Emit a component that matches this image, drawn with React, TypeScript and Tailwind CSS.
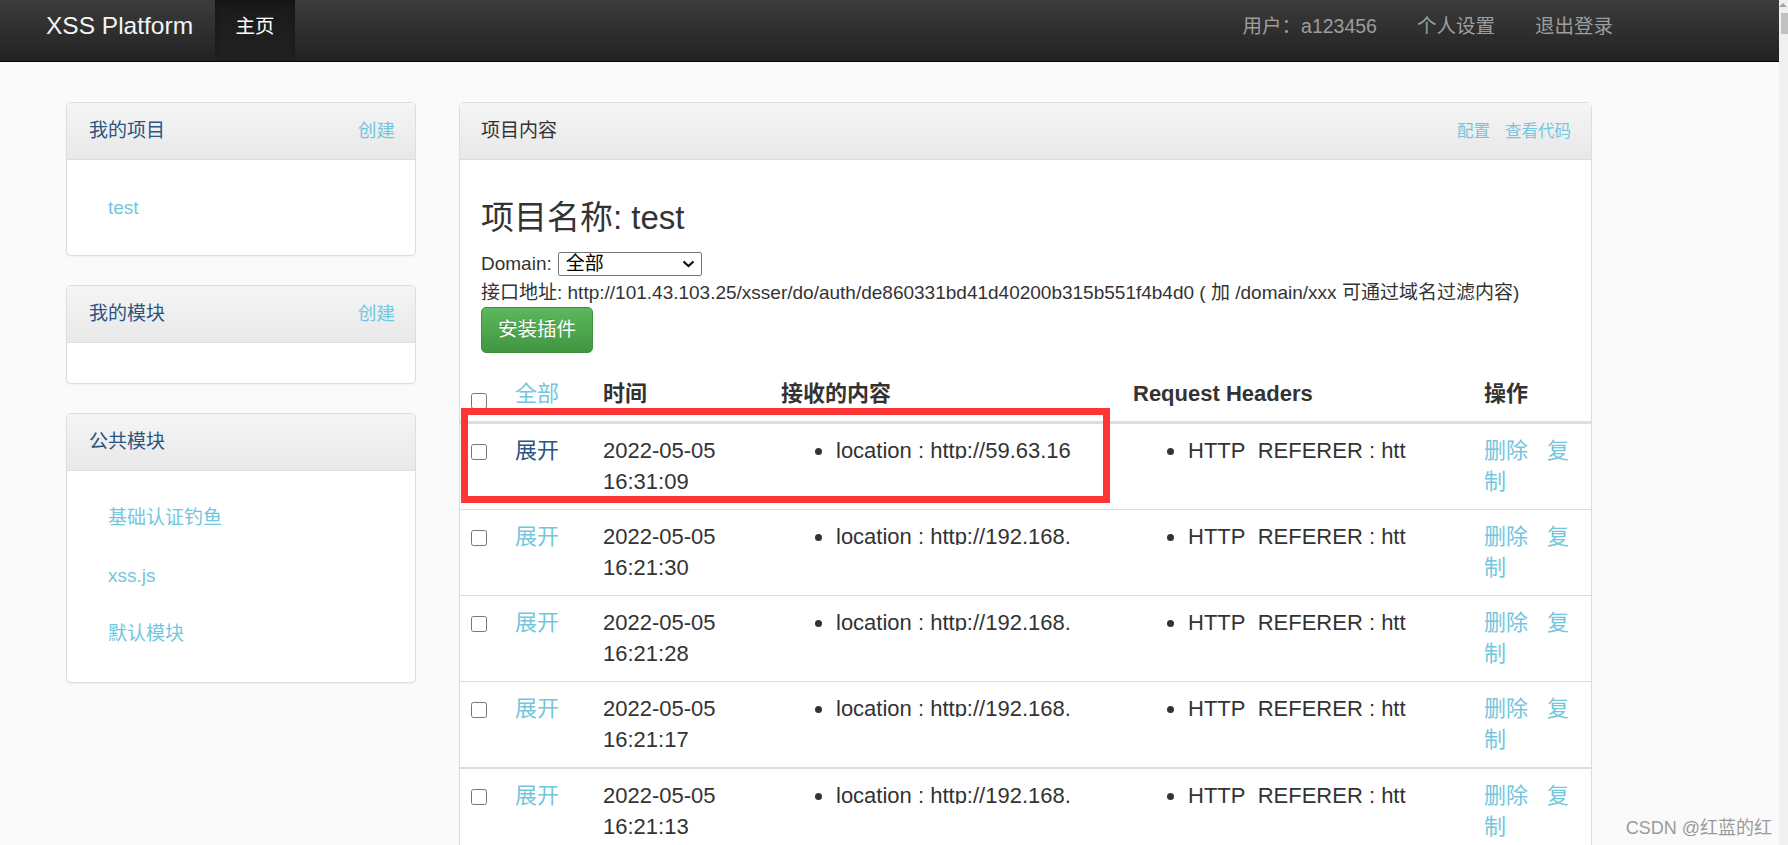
import React from "react";

type Row = { date: string; time: string; loc: string; visited?: boolean; thick?: boolean };

const rows: Row[] = [
  { date: "2022-05-05", time: "16:31:09", loc: "location : http://59.63.16", visited: true },
  { date: "2022-05-05", time: "16:21:30", loc: "location : http://192.168." },
  { date: "2022-05-05", time: "16:21:28", loc: "location : http://192.168." },
  { date: "2022-05-05", time: "16:21:17", loc: "location : http://192.168.", thick: true },
  { date: "2022-05-05", time: "16:21:13", loc: "location : http://192.168." },
];

const cols = "grid grid-cols-[43px_88px_178px_352px_351px_1fr]";

function SidePanel({
  title,
  action,
  items,
  bodyClass,
}: {
  title: string;
  action?: string;
  items: string[];
  bodyClass: string;
}) {
  return (
    <div className="rounded-[5px] border border-[#dddddd] bg-white shadow-[0_1px_2px_rgba(0,0,0,0.05)] overflow-hidden">
      <div className="flex h-[57px] items-center justify-between border-b border-[#dddddd] bg-linear-to-b from-[#f5f5f5] to-[#e8e8e8] pl-[22px] pr-[20px]">
        <span className="text-[19px] text-[#2b5482]">{title}</span>
        {action && <a className="text-[18.5px] text-[#72c6de]">{action}</a>}
      </div>
      <ul className={bodyClass}>
        {items.map((it) => (
          <li key={it} className="pl-[41px] text-[19px] leading-[58px] text-[#72c6de]">
            <a>{it}</a>
          </li>
        ))}
      </ul>
    </div>
  );
}

function Bullet({ text }: { text: string }) {
  return (
    <div className="flex items-start pl-[34px]">
      <span className="mt-[12px] h-[7px] w-[7px] shrink-0 rounded-full bg-[#333333]" />
      <span className="ml-[14px] block h-[23px] overflow-hidden whitespace-nowrap leading-[30.5px]">{text}</span>
    </div>
  );
}

export default function App() {
  return (
    <div className="flex h-[845px] w-[1788px] overflow-hidden font-['Liberation_Sans','Noto_Sans_CJK_SC',sans-serif] text-[#333333]">
      <div className="relative h-[845px] w-[1779px] overflow-hidden bg-[#fafafa]">
        {/* navbar */}
        <div className="flex h-[62px] items-stretch border-b border-[#080808] bg-linear-to-b from-[#3c3c3c] to-[#222222]">
          <a className="flex items-center pb-[8px] pl-[46px] pr-[22px] text-[24.5px] text-[#f4f4f4]">XSS Platform</a>
          <a className="flex w-[80px] items-center justify-center bg-linear-to-b from-[#1a1a1a] to-[#222222] pb-[8px] text-[19.5px] text-white shadow-[inset_0_3px_9px_rgba(0,0,0,0.25)]">
            主页
          </a>
          <div className="ml-auto flex items-center gap-[40px] pb-[8px] pr-[166px] text-[19.5px] text-[#9d9d9d]">
            <span>用户：a123456</span>
            <a>个人设置</a>
            <a>退出登录</a>
          </div>
        </div>

        {/* main */}
        <div className="flex items-start gap-[43px] pl-[66px] pt-[40px]">
          <div className="flex w-[350px] flex-col gap-[29px]">
            <SidePanel title="我的项目" action="创建" items={["test"]} bodyClass="pt-[19px] pb-[18px]" />
            <SidePanel title="我的模块" action="创建" items={[]} bodyClass="h-[40px]" />
            <SidePanel title="公共模块" items={["基础认证钓鱼", "xss.js", "默认模块"]} bodyClass="pt-[18px] pb-[19px]" />
          </div>

          <div className="w-[1133px] rounded-t-[5px] border border-[#dddddd] bg-white">
            <div className="flex h-[57px] items-center justify-between border-b border-[#dddddd] bg-linear-to-b from-[#f5f5f5] to-[#e8e8e8] pl-[21px] pr-[20px]">
              <span className="text-[19px]">项目内容</span>
              <div className="flex gap-[15px] text-[16.5px] text-[#72c6de]">
                <a>配置</a>
                <a>查看代码</a>
              </div>
            </div>

            <div className="pl-[21px] pt-[40px]">
              <h3 className="text-[33px] leading-[36px]">项目名称: test</h3>
              <div className="mt-[14px] flex h-[28px] items-center text-[19px]">
                <span>Domain:</span>
                <div className="ml-[6px] flex h-[24px] w-[144px] items-center justify-between rounded-[2px] border border-[#767676] bg-white pl-[7px] pr-[6px] text-[19px] text-black">
                  <span>全部</span>
                  <svg width="13" height="8" viewBox="0 0 13 8">
                    <polyline points="1.5,1.5 6.5,6 11.5,1.5" fill="none" stroke="#111" strokeWidth="2.2" />
                  </svg>
                </div>
              </div>
              <div className="h-[29px] text-[19px] leading-[29px] whitespace-nowrap">
                接口地址: http://101.43.103.25/xsser/do/auth/de860331bd41d40200b315b551f4b4d0 ( 加 /domain/xxx 可通过域名过滤内容)
              </div>
              <button className="h-[46px] w-[112px] rounded-[5px] border border-[#3e8f3e] bg-linear-to-b from-[#5cb85c] to-[#419641] text-[19.5px] text-white [text-shadow:0_-1px_0_rgba(0,0,0,0.2)]">
                安装插件
              </button>
            </div>

            {/* table */}
            <div className="relative mt-[14px] text-[22px]">
              <div className={`${cols} border-b-[3px] border-[#dddddd] font-bold`}>
                <div className="px-[11px] py-[12px]">
                  <div className="flex h-[30px] items-end">
                    <input type="checkbox" className="m-0 h-[16px] w-[16px]" />
                  </div>
                </div>
                <div className="px-[12px] py-[12px] font-normal leading-[30px] text-[#72c6de]">全部</div>
                <div className="px-[12px] py-[12px] leading-[30px]">时间</div>
                <div className="px-[12px] py-[12px] leading-[30px]">接收的内容</div>
                <div className="px-[12px] py-[12px] leading-[30px]">Request Headers</div>
                <div className="px-[12px] py-[12px] leading-[30px]">操作</div>
              </div>

              {rows.map((r, i) => (
                <div
                  key={r.time}
                  className={`${cols} ${i > 0 ? "border-t border-[#dddddd]" : ""} ${r.thick ? "border-b border-[#dddddd]" : ""}`}
                >
                  <div className="px-[11px] py-[12px]">
                    <input type="checkbox" className="m-0 mt-[4px] h-[16px] w-[16px]" />
                  </div>
                  <div className={`px-[12px] py-[12px] leading-[30.5px] ${r.visited ? "text-[#2b5482]" : "text-[#72c6de]"}`}>
                    <a>展开</a>
                  </div>
                  <div className="px-[12px] py-[12px] leading-[30.5px]">
                    <div>{r.date}</div>
                    <div>{r.time}</div>
                  </div>
                  <div className="px-[12px] py-[12px]">
                    <Bullet text={r.loc} />
                  </div>
                  <div className="px-[12px] py-[12px]">
                    <Bullet text="HTTP_REFERER : htt" />
                  </div>
                  <div className="px-[12px] py-[12px] leading-[30.5px] text-[#72c6de]">
                    <a>删除</a>
                    <a className="ml-[19px]">复制</a>
                  </div>
                </div>
              ))}

              {/* annotation box */}
              <div className="pointer-events-none absolute left-[1px] top-[41px] h-[95px] w-[649px] border-[7px] border-[#fc3535]" />
            </div>
          </div>
        </div>

        <div className="absolute bottom-[7px] right-[7px] text-[18px] leading-[20px] text-[#9a9a9a]">CSDN @红蓝的红</div>
      </div>

      {/* scrollbar edge */}
      <div className="flex h-[845px] w-[9px] flex-col bg-[#f0f0f0]">
        <svg width="9" height="10" viewBox="0 0 9 10" className="shrink-0">
          <polygon points="4,3 8,7 0,7" fill="#a3a3a3" />
        </svg>
        <div className="ml-[2px] mt-[3px] h-[21px] w-[7px] bg-[#c1c1c1]" />
      </div>
    </div>
  );
}
